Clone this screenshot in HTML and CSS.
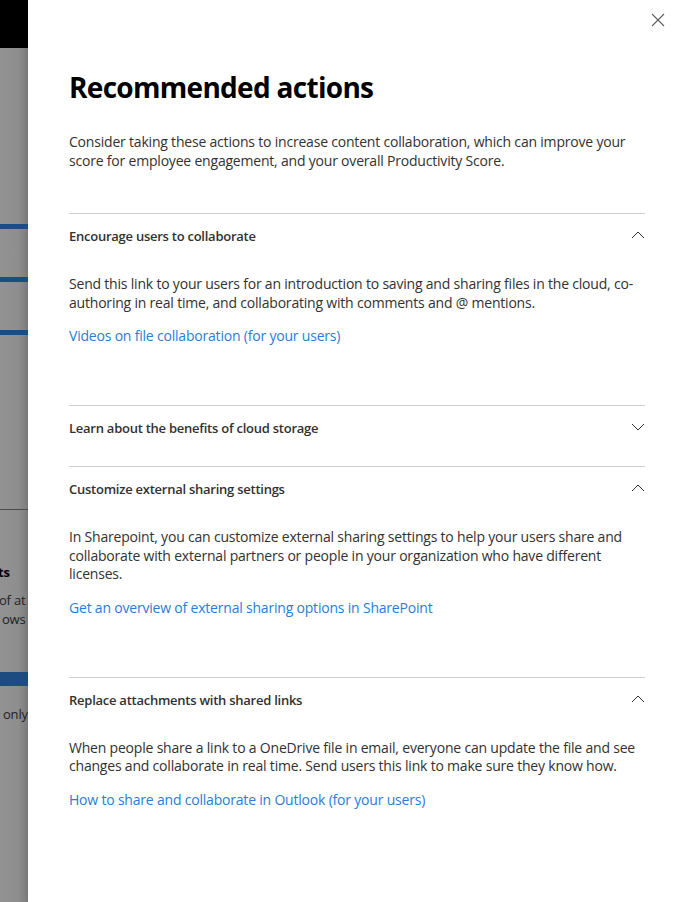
FILE: index.html
```html
<!DOCTYPE html>
<html lang="en">
<head>
<meta charset="utf-8">
<title>Recommended actions</title>
<link rel="stylesheet" href="styles.css">
</head>
<body>
<div class="backdrop">
  <div class="bd-top"></div>
  <div class="bd-bar bar1"></div>
  <div class="bd-bar bar2"></div>
  <div class="bd-bar bar3"></div>
  <div class="bd-rule"></div>
  <div class="bd-bold">ts</div>
  <div class="bd-text t1">of at</div>
  <div class="bd-text t2">ows</div>
  <div class="bd-bar bar4"></div>
  <div class="bd-text t3">only</div>
</div>
<main class="panel">
  <button class="close" aria-label="Close">
    <svg width="14" height="14" viewBox="0 0 14 14"><path d="M1 1L13 13M13 1L1 13" stroke="#605e5c" stroke-width="1.1" fill="none"/></svg>
  </button>
  <h1 class="title">Recommended actions</h1>
  <p class="intro">Consider taking these actions to increase content collaboration, which can improve your score for employee engagement, and your overall Productivity Score.</p>

  <section class="item open">
    <div class="item-head"><span>Encourage users to collaborate</span>
      <svg class="chev" width="14" height="8" viewBox="0 0 14 8"><path d="M1 7L7 1L13 7" stroke="#323130" stroke-width="1" fill="none"/></svg></div>
    <div class="item-body">
      <p>Send this link to your users for an introduction to saving and sharing files in the cloud, co-authoring in real time, and collaborating with comments and @ mentions.</p>
      <a href="#">Videos on file collaboration (for your users)</a>
    </div>
  </section>

  <section class="item closed">
    <div class="item-head"><span>Learn about the benefits of cloud storage</span>
      <svg class="chev" width="14" height="8" viewBox="0 0 14 8"><path d="M1 1L7 7L13 1" stroke="#323130" stroke-width="1" fill="none"/></svg></div>
  </section>

  <section class="item open">
    <div class="item-head"><span>Customize external sharing settings</span>
      <svg class="chev" width="14" height="8" viewBox="0 0 14 8"><path d="M1 7L7 1L13 7" stroke="#323130" stroke-width="1" fill="none"/></svg></div>
    <div class="item-body">
      <p>In Sharepoint, you can customize external sharing settings to help your users share and collaborate with external partners or people in your organization who have different licenses.</p>
      <a href="#">Get an overview of external sharing options in SharePoint</a>
    </div>
  </section>

  <section class="item open">
    <div class="item-head"><span>Replace attachments with shared links</span>
      <svg class="chev" width="14" height="8" viewBox="0 0 14 8"><path d="M1 7L7 1L13 7" stroke="#323130" stroke-width="1" fill="none"/></svg></div>
    <div class="item-body">
      <p>When people share a link to a OneDrive file in email, everyone can update the file and see changes and collaborate in real time. Send users this link to make sure they know how.</p>
      <a href="#">How to share and collaborate in Outlook (for your users)</a>
    </div>
  </section>
</main>
</body>
</html>
```
FILE: styles.css
```css
html, body {
  margin: 0;
  padding: 0;
  height: 100%;
}
body {
  display: flex;
  font-family: "Open Sans", "Noto Sans", sans-serif;
  color: #323130;
  background: #fff;
  overflow: hidden;
}
.backdrop {
  position: relative;
  width: 28px;
  flex: 0 0 28px;
  height: 902px;
  background: linear-gradient(to right, #929292 0, #8e8e8e 18px, #7f7f7f 26px, #777 28px);
  overflow: hidden;
}
.bd-top {
  position: absolute;
  left: 0; top: 0;
  width: 28px; height: 48px;
  background: #000;
}
.bd-bar {
  position: absolute;
  left: 0;
  width: 28px;
  background: #1d4d80;
}
.bar1 { top: 224px; height: 5px; }
.bar2 { top: 277px; height: 5px; }
.bar3 { top: 330px; height: 5px; }
.bar4 { top: 672px; height: 14px; }
.bd-rule {
  position: absolute;
  left: 0; top: 509px;
  width: 28px; height: 1px;
  background: #4a4a4a;
}
.bd-bold, .bd-text {
  position: absolute;
  white-space: nowrap;
  font-size: 13px;
  line-height: 20px;
  letter-spacing: -0.2px;
}
.bd-bold { top: 562px; left: -2px; font-weight: 700; color: #000; }
.bd-text { color: #222; }
.t1 { top: 590px; left: -1px; }
.t2 { top: 609px; left: 2px; }
.t3 { top: 704px; left: 3px; }

.panel {
  position: relative;
  flex: 1;
  padding: 67px 41px 0 41px;
  box-sizing: border-box;
}
.close {
  position: absolute;
  top: 13px;
  right: 21px;
  width: 14px;
  height: 14px;
  padding: 0;
  border: 0;
  background: none;
  display: flex;
}
.title {
  margin: 0;
  font-size: 28px;
  line-height: 40px;
  font-weight: 700;
  color: #000;
  letter-spacing: -0.7px;
}
.intro {
  margin: 25px 0 43px;
  font-size: 14px;
  line-height: 19px;
  letter-spacing: -0.2px;
}
.item {
  border-top: 1px solid #d2d0ce;
}
.item.closed { padding-bottom: 14px; }
.item-head {
  display: flex;
  justify-content: space-between;
  align-items: center;
  box-sizing: border-box;
  height: 46px;
  padding-bottom: 2px;
  font-size: 13px;
  font-weight: 600;
  letter-spacing: -0.25px;
  color: #323130;
}
.item-head .chev { margin-top: -2px; }
.item-body {
  padding: 15px 0 59px;
}
.item-body p {
  margin: 0 0 14px;
  font-size: 14px;
  line-height: 18.5px;
  letter-spacing: -0.2px;
}
.item-body a {
  display: block;
  font-size: 14px;
  line-height: 20px;
  letter-spacing: -0.2px;
  color: #2b7cd3;
  text-decoration: none;
}
```
